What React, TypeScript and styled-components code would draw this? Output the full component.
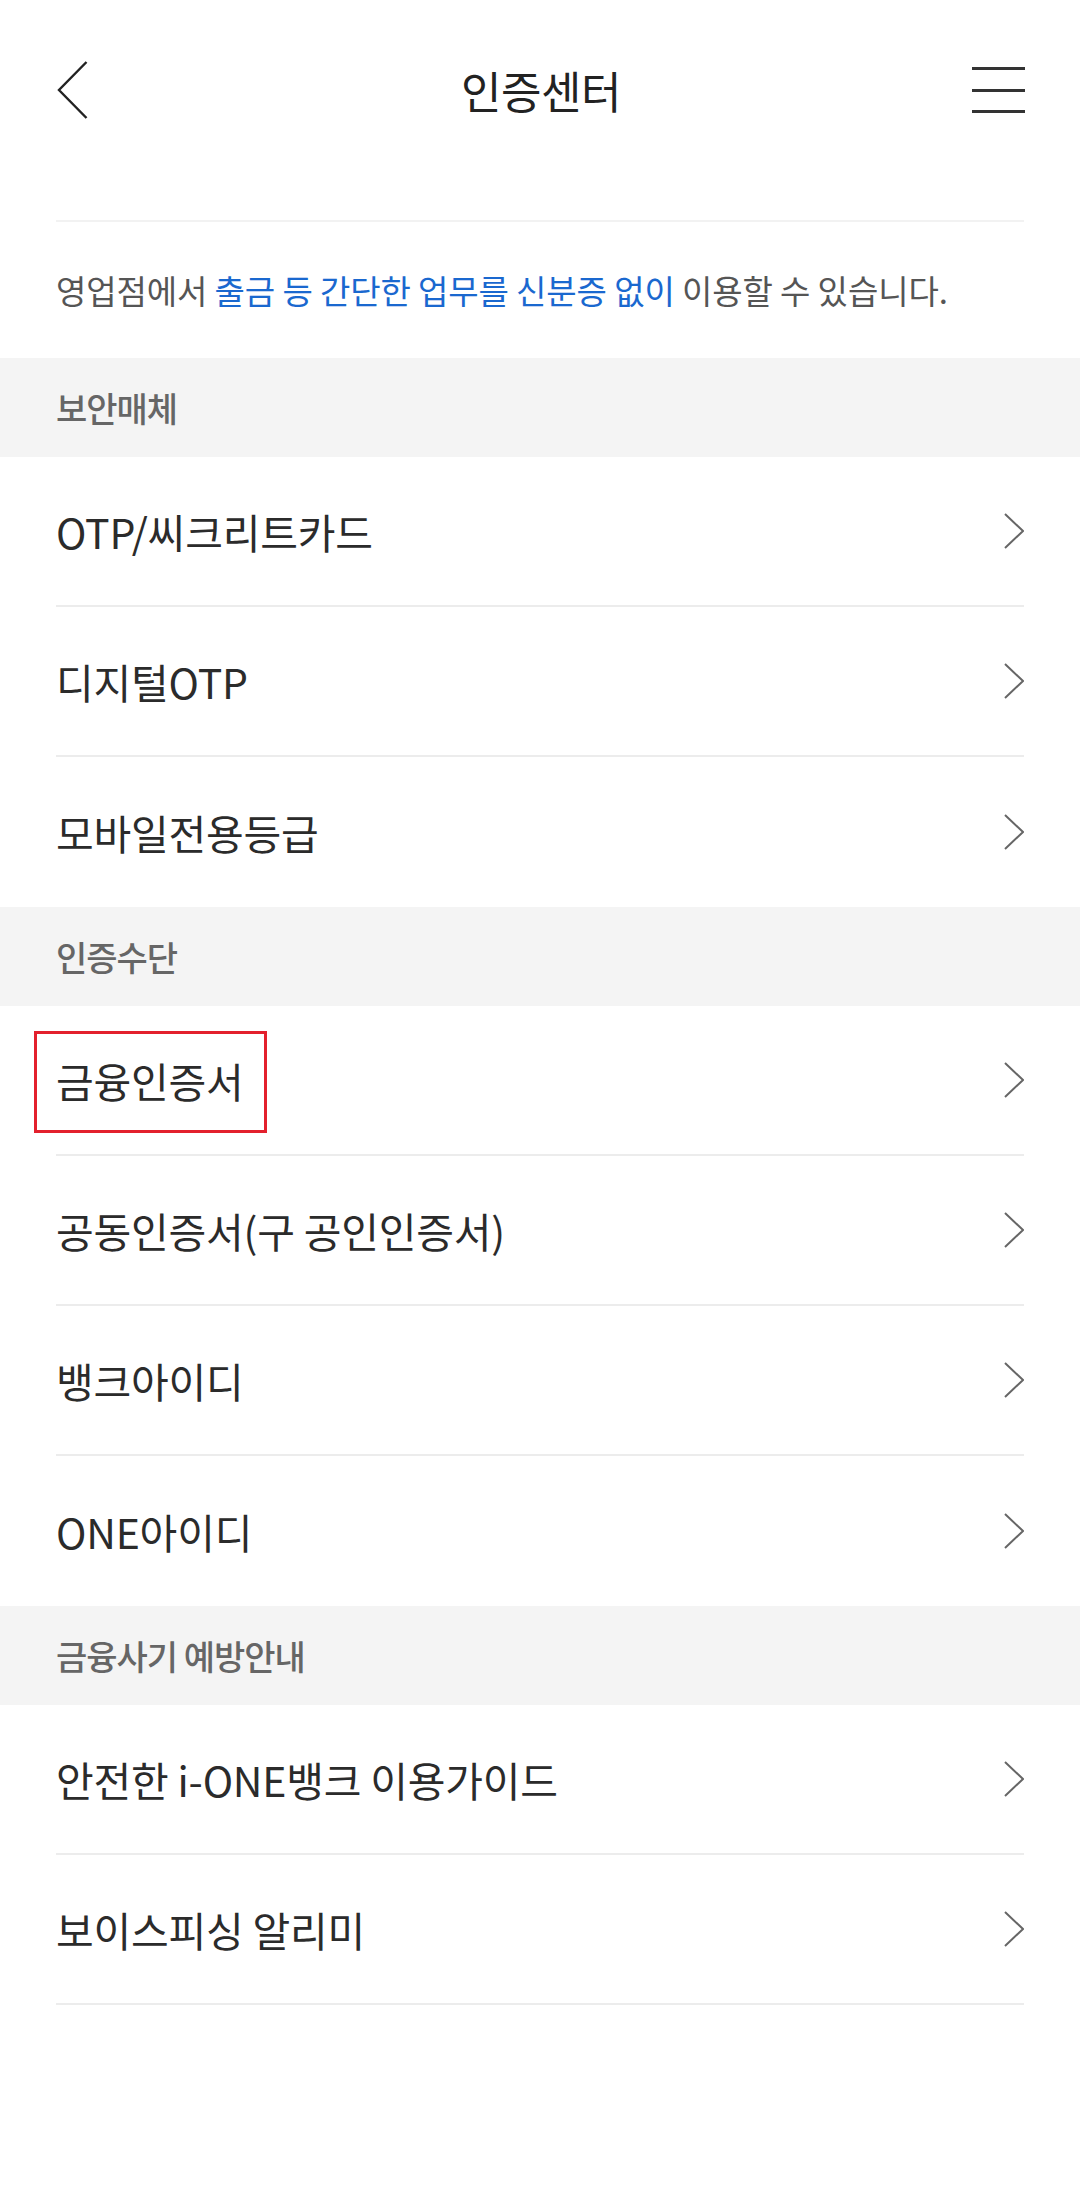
import styled, { createGlobalStyle } from "styled-components";

const GlobalStyle = createGlobalStyle`
  html, body {
    margin: 0;
    padding: 0;
    background: #ffffff;
  }

  body {
    font-family: "Noto Sans CJK KR", "Noto Sans", sans-serif;
    color: #222222;
  }
`;

const Page = styled.div`
  width: 1080px;
  min-height: 2185px;
  background: #ffffff;
`;

const Header = styled.header`
  height: 180px;
  padding: 0 55px 0 57px;
  display: grid;
  grid-template-columns: 1fr auto 1fr;
  align-items: center;
`;

const BackButton = styled.button`
  justify-self: start;
  width: 32px;
  height: 58px;
  padding: 0;
  border: none;
  background: none;
  display: flex;
  align-items: center;
`;

const Title = styled.h1`
  margin: 0;
  font-size: 44px;
  font-weight: 400;
  letter-spacing: -0.5px;
  color: #222222;
`;

const MenuButton = styled.button`
  justify-self: end;
  width: 53px;
  height: 46px;
  padding: 0;
  border: none;
  background: none;
  display: flex;
  flex-direction: column;
  justify-content: space-between;
`;

const MenuBar = styled.span`
  display: block;
  height: 3px;
  width: 100%;
  background: #333333;
`;

const TopRule = styled.div`
  margin: 40px 56px 0;
  border-top: 2px solid #f2f2f2;
`;

const Notice = styled.p`
  margin: 0;
  height: 136px;
  padding: 0 56px;
  display: flex;
  align-items: center;
  font-size: 33px;
  letter-spacing: -0.1px;
  color: #555555;
  white-space: pre;
`;

const Accent = styled.span`
  color: #1a68cf;
`;

const SectionHeader = styled.div`
  height: 99px;
  padding: 0 56px;
  background: #f4f4f4;
  display: flex;
  align-items: center;
  font-size: 34px;
  font-weight: 500;
  letter-spacing: -1px;
  color: #666666;
`;

interface RowProps {
  $divider: boolean;
}

const Row = styled.a<RowProps>`
  position: relative;
  margin: 0 56px;
  height: ${(p) => (p.$divider ? "148px" : "150px")};
  display: flex;
  align-items: center;
  justify-content: space-between;
  border-bottom: ${(p) => (p.$divider ? "2px solid #ececec" : "none")};
  text-decoration: none;
`;

const RowLabel = styled.span`
  font-size: 41px;
  letter-spacing: -0.2px;
  color: #2b2b2b;
`;

const Highlight = styled.span`
  position: absolute;
  left: -22px;
  top: 25px;
  width: 233px;
  height: 102px;
  box-sizing: border-box;
  border: 3px solid #e3202d;
`;

const Chevron = () => (
  <svg width="20" height="36" viewBox="0 0 20 36">
    <polyline points="1,1 19,18 1,35" fill="none" stroke="#666666" strokeWidth="2" />
  </svg>
);

const BackIcon = () => (
  <svg width="31" height="58" viewBox="0 0 31 58">
    <polyline points="29.5,1 2,29 29.5,57" fill="none" stroke="#222222" strokeWidth="2.4" />
  </svg>
);

interface MenuItem {
  label: string;
  highlight?: boolean;
}

interface Section {
  title: string;
  items: MenuItem[];
  lastDivider: boolean;
}

const sections: Section[] = [
  {
    title: "보안매체",
    items: [{ label: "OTP/씨크리트카드" }, { label: "디지털OTP" }, { label: "모바일전용등급" }],
    lastDivider: false,
  },
  {
    title: "인증수단",
    items: [
      { label: "금융인증서", highlight: true },
      { label: "공동인증서(구 공인인증서)" },
      { label: "뱅크아이디" },
      { label: "ONE아이디" },
    ],
    lastDivider: false,
  },
  {
    title: "금융사기 예방안내",
    items: [{ label: "안전한 i-ONE뱅크 이용가이드" }, { label: "보이스피싱 알리미" }],
    lastDivider: true,
  },
];

const App = () => {
  return (
    <Page>
      <GlobalStyle />
      <Header>
        <BackButton aria-label="뒤로">
          <BackIcon />
        </BackButton>
        <Title>인증센터</Title>
        <MenuButton aria-label="메뉴">
          <MenuBar />
          <MenuBar />
          <MenuBar />
        </MenuButton>
      </Header>
      <TopRule />
      <Notice>
        영업점에서 <Accent>출금 등 간단한 업무를 신분증 없이</Accent> 이용할 수 있습니다.
      </Notice>
      {sections.map((section) => (
        <div key={section.title}>
          <SectionHeader>{section.title}</SectionHeader>
          {section.items.map((item, i) => (
            <Row
              key={item.label}
              $divider={i < section.items.length - 1 || section.lastDivider}
            >
              <RowLabel>{item.label}</RowLabel>
              <Chevron />
              {item.highlight && <Highlight />}
            </Row>
          ))}
        </div>
      ))}
    </Page>
  );
};

export default App;
